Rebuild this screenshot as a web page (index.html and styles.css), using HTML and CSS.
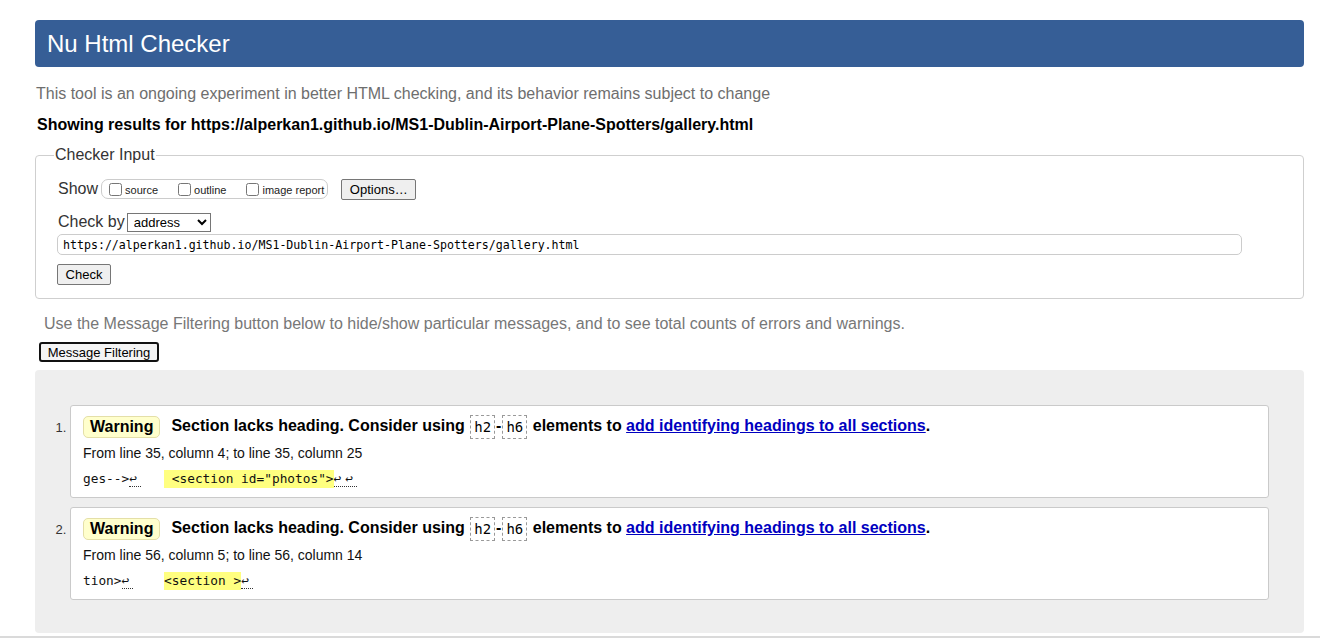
FILE: index.html
```html
<!DOCTYPE html>
<html lang="en">
<head>
<meta charset="utf-8">
<title>Showing results for https://alperkan1.github.io/MS1-Dublin-Airport-Plane-Spotters/gallery.html - Nu Html Checker</title>
<link rel="stylesheet" href="styles.css">
</head>
<body>
<div class="page">
  <h1 class="title">Nu Html Checker</h1>
  <p class="intro">This tool is an ongoing experiment in better HTML checking, and its behavior remains subject to change</p>
  <p class="showing">Showing results for https://alperkan1.github.io/MS1-Dublin-Airport-Plane-Spotters/gallery.html</p>

  <fieldset class="input-box">
    <legend class="legend">Checker Input</legend>
    <div class="row show-row">
      <span class="row-label">Show</span>
      <span class="show-group">
        <label class="chk"><input type="checkbox"><span>source</span></label>
        <label class="chk"><input type="checkbox"><span>outline</span></label>
        <label class="chk"><input type="checkbox"><span>image report</span></label>
      </span>
      <button class="btn options">Options…</button>
    </div>
    <div class="row by-row">
      <span class="row-label">Check by</span>
      <select class="select"><option>address</option></select>
    </div>
    <input class="url" type="text" value="https://alperkan1.github.io/MS1-Dublin-Airport-Plane-Spotters/gallery.html">
    <button class="btn check">Check</button>
  </fieldset>

  <p class="filter-note">Use the Message Filtering button below to hide/show particular messages, and to see total counts of errors and warnings.</p>
  <button class="filter-btn">Message Filtering</button>

  <div class="results">
    <ol class="msgs">
      <li class="msg">
        <p class="msg-head"><strong class="badge">Warning</strong><span class="msg-text">Section lacks heading. Consider using <code class="tag">h2</code>-<code class="tag">h6</code> elements to <a href="#" class="link">add identifying headings to all sections</a>.</span></p>
        <p class="loc">From line 35, column 4; to line 35, column 25</p>
        <p class="extract"><span>ges--&gt;</span><span class="lf">↩</span><span>   </span><b class="hl"> &lt;section id="photos"&gt;</b><span class="lf">↩↩</span></p>
      </li>
      <li class="msg">
        <p class="msg-head"><strong class="badge">Warning</strong><span class="msg-text">Section lacks heading. Consider using <code class="tag">h2</code>-<code class="tag">h6</code> elements to <a href="#" class="link">add identifying headings to all sections</a>.</span></p>
        <p class="loc">From line 56, column 5; to line 56, column 14</p>
        <p class="extract"><span>tion&gt;</span><span class="lf">↩</span><span>    </span><b class="hl">&lt;section &gt;</b><span class="lf">↩</span></p>
      </li>
    </ol>
  </div>
</div>
<div class="bottom-line"></div>
</body>
</html>
```
FILE: styles.css
```css
html, body {
  margin: 0;
  padding: 0;
  background: #fff;
}
body {
  font-family: "Liberation Sans", Arial, sans-serif;
  color: #000;
  font-size: 16px;
}
.page {
  padding: 20px 16px 0 35px;
}
.title {
  margin: 0;
  height: 47px;
  line-height: 47px;
  padding-left: 12px;
  background: #365e96;
  border-radius: 4px;
  color: #fff;
  font-size: 24px;
  font-weight: normal;
}
.intro {
  margin: 17px 0 0 1px;
  line-height: 20px;
  color: #6e6e6e;
}
.showing {
  margin: 11px 0 0 2px;
  line-height: 20px;
  font-weight: bold;
}
.input-box {
  margin: 10px 0 0 0;
  padding: 0 0 13px 21px;
  border: 1px solid #cfcfcf;
  border-radius: 4px;
}
.legend {
  margin-left: -3px;
  padding: 0 1px;
  color: #333;
  line-height: 20px;
}
.row {
  display: flex;
  align-items: center;
}
.show-row {
  height: 20px;
  margin-top: 14px;
}
.row-label {
  color: #333;
  margin-left: 1px;
}
.show-group {
  display: flex;
  align-items: center;
  height: 18px;
  margin-left: 3px;
  padding: 0 3px 0 4px;
  border: 1px solid #ccc;
  border-radius: 7px;
}
.chk {
  display: flex;
  align-items: center;
  font-size: 11px;
  color: #222;
}
.chk input {
  margin: 0 3px 0 3px;
  width: 13px;
  height: 13px;
}
.chk span {
  margin-right: 17px;
  padding-top: 2px;
}
.chk:last-child span {
  margin-right: 0;
}
.btn {
  font-family: "Liberation Sans", Arial, sans-serif;
  font-size: 13px;
  background: #efefef;
  border: 1px solid #767676;
  border-radius: 2px;
  color: #000;
  padding: 0 6px;
  height: 21px;
}
.options {
  margin-left: 13px;
  width: 75px;
}
.by-row {
  margin-top: 13px;
  height: 20px;
}
.select {
  margin-left: 2px;
  width: 84px;
  height: 19px;
  font-family: "Liberation Sans", Arial, sans-serif;
  font-size: 13px;
  border: 1px solid #767676;
  border-radius: 0;
  background: #fff;
  color: #000;
  padding: 0 2px;
}
.url {
  display: block;
  box-sizing: border-box;
  margin: 2px 0 0 0;
  width: 1185px;
  height: 21px;
  border: 1px solid #ccc;
  border-radius: 5px;
  padding: 0 5px;
  font-family: "DejaVu Sans Mono", "Liberation Mono", monospace;
  font-size: 11.6px;
  color: #000;
  outline: none;
}
.check {
  display: block;
  margin-top: 9px;
  width: 54px;
}
.filter-note {
  margin: 15px 0 0 9px;
  line-height: 20px;
  color: #777;
}
.filter-btn {
  display: block;
  margin: 8px 0 0 4px;
  height: 20px;
  width: 120px;
  padding: 0;
  font-family: "Liberation Sans", Arial, sans-serif;
  font-size: 13px;
  color: #000;
  background: #f4f4f4;
  border: 2px solid #111;
  border-radius: 3px;
}
.results {
  margin-top: 8px;
  background: #eee;
  border-radius: 4px;
  padding: 35px 35px 33px 35px;
}
.msgs {
  margin: 0;
  padding: 0;
  display: flex;
  flex-direction: column;
  gap: 9px;
  list-style: decimal;
}
.msg {
  background: #fff;
  border: 1px solid #cacaca;
  border-radius: 3px;
  height: 91px;
  padding: 0 12px;
  font-size: 14px;
  color: #222;
}
.msg::marker {
  font-size: 13px;
  color: #333;
}
.msg-head {
  margin: 10px 0 0 0;
  display: flex;
  align-items: center;
  height: 22px;
  font-size: 16px;
  font-weight: bold;
  color: #000;
}
.badge {
  display: inline-block;
  box-sizing: border-box;
  height: 22px;
  line-height: 20px;
  padding: 0 6px;
  background: #ffffcc;
  border: 1px solid #e4dfa8;
  border-radius: 5px;
  margin-right: 11px;
}
.tag {
  display: inline-block;
  font-family: "DejaVu Sans Mono", "Liberation Mono", monospace;
  font-weight: normal;
  font-size: 14px;
  border: 1px dashed #999;
  padding: 0 3px;
  height: 22px;
  line-height: 22px;
  vertical-align: middle;
  margin: 0 1px;
}
.link {
  color: #0000c0;
  text-decoration: underline;
}
.loc {
  margin: 7px 0 0 0;
  line-height: 16px;
  color: #111;
}
.extract {
  margin: 9px 0 0 0;
  line-height: 17px;
  white-space: pre;
  font-family: "DejaVu Sans Mono", "Liberation Mono", monospace;
  font-size: 12.8px;
  color: #111;
}
.hl {
  font-weight: normal;
  background: #ffff80;
  padding: 1px 0 2px;
}
.lf {
  border-bottom: 1px dotted #333;
  letter-spacing: 4px;
}
.bottom-line {
  margin-top: 3px;
  border-top: 2px solid #dadada;
  height: 20px;
}
```
